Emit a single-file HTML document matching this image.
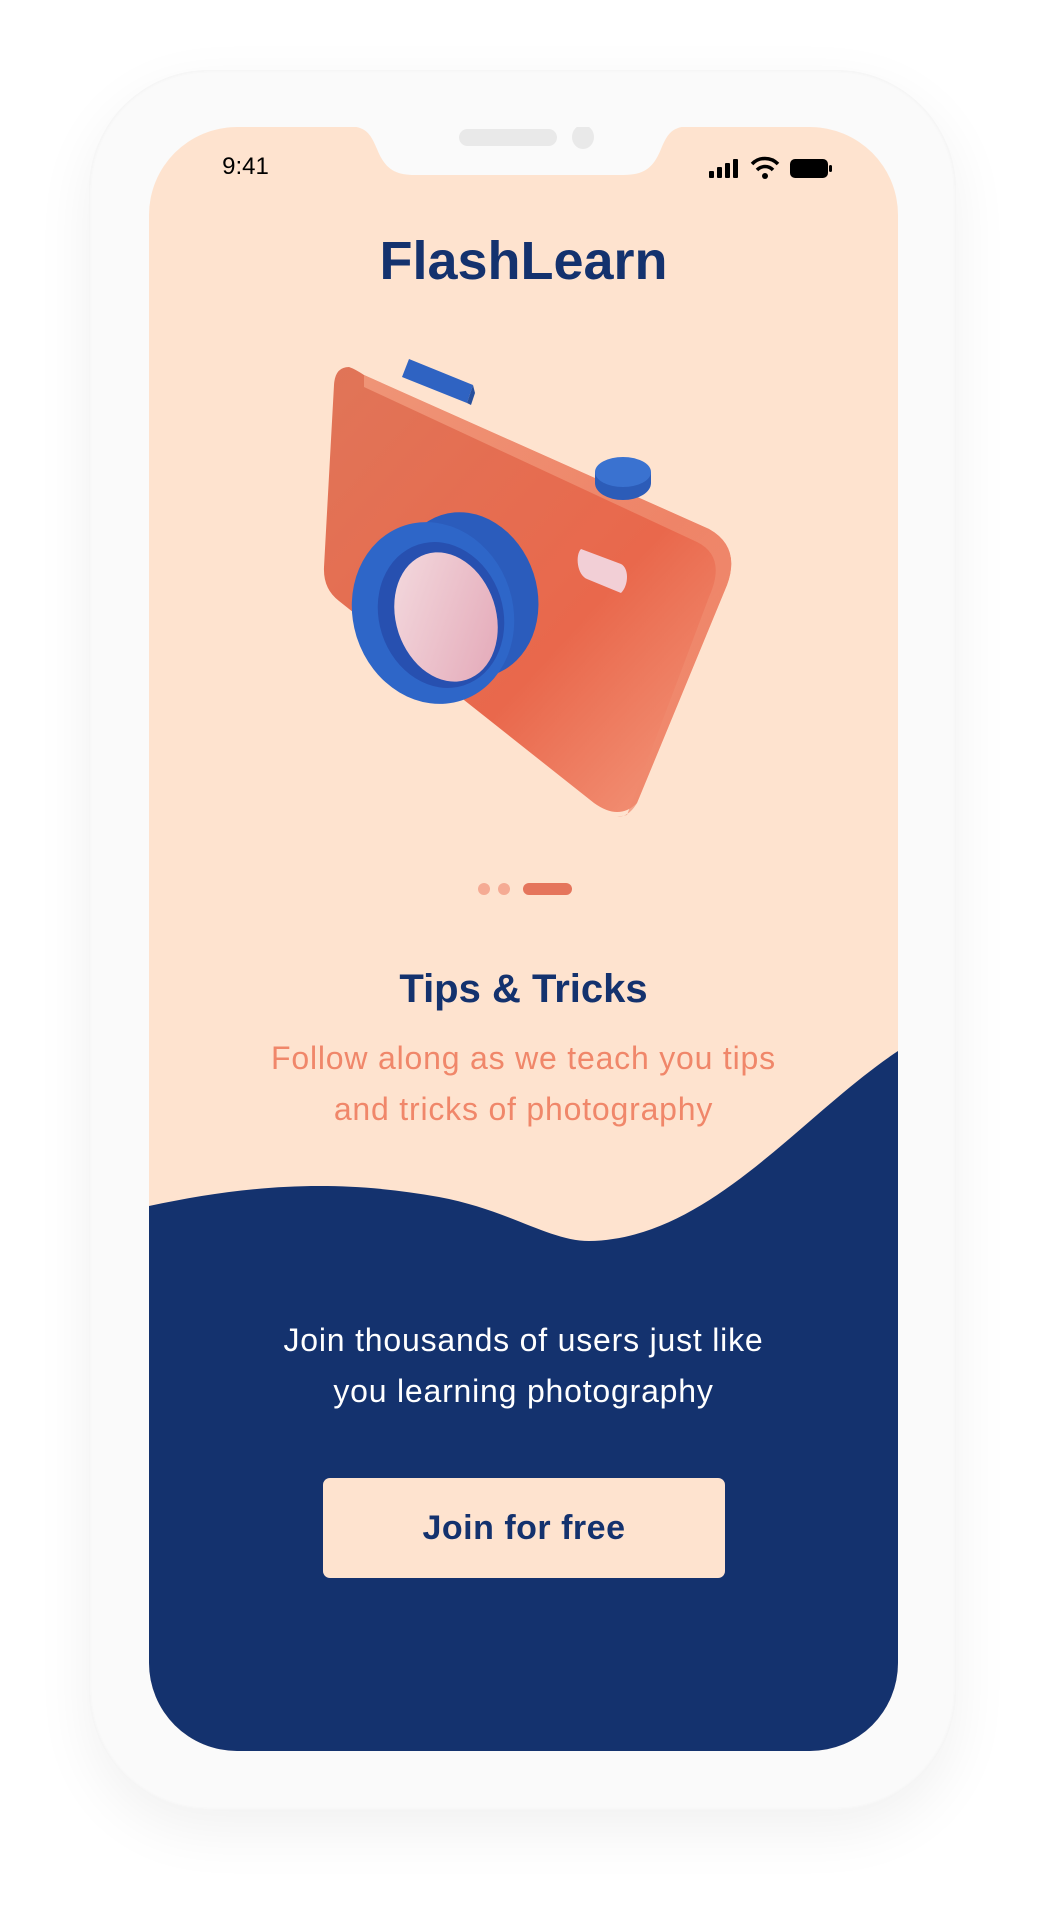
<!DOCTYPE html>
<html><head><meta charset="utf-8"><style>
html,body{margin:0;padding:0;}
body{width:1046px;height:1920px;background:#fff;position:relative;overflow:hidden;font-family:"Liberation Sans",sans-serif;}
.frame{position:absolute;left:89px;top:70px;width:867px;height:1740px;border-radius:120px;background:#fafafa;box-shadow:0 20px 60px rgba(0,0,0,0.06), inset 0 0 4px rgba(0,0,0,0.05);}
.screen{position:absolute;left:149px;top:127px;width:749px;height:1624px;border-radius:88px;overflow:hidden;background:#fee3cf;}
.t{position:absolute;left:0;width:749px;text-align:center;}
</style></head><body>
<div class="frame"></div>
<div class="screen">
<svg width="749" height="1624" style="position:absolute;left:0;top:0">
<defs>
<linearGradient id="bg" x1="0" y1="0" x2="1" y2="1"><stop offset="0" stop-color="#e07558"/><stop offset="0.6" stop-color="#e9684c"/><stop offset="1" stop-color="#f59c80"/></linearGradient>
<linearGradient id="sg" x1="0" y1="0" x2="1" y2="1"><stop offset="0" stop-color="#f5a284"/><stop offset="1" stop-color="#ee8468"/></linearGradient>
<linearGradient id="lg" x1="0" y1="0" x2="1" y2="1"><stop offset="0" stop-color="#f4dce0"/><stop offset="1" stop-color="#e3a6b6"/></linearGradient>
</defs>
<path d="M0 1079 C 90 1060, 180 1050, 290 1070 C 360 1083, 400 1114, 440 1114 C 560 1112, 650 990, 749 924 L749 1624 L0 1624 Z" fill="#14326e"/>
<path d="M200 -1 C 218 0 222 8 228 22 C 236 42 246 48 266 48 L474 48 C 494 48 504 42 512 22 C 518 8 522 0 540 -1 Z" fill="#fafafa"/>
<rect x="310" y="2" width="98" height="17" rx="8.5" fill="#e9e9e9"/>
<ellipse cx="434" cy="10" rx="11" ry="12" fill="#e9e9e9"/>
<rect x="560" y="44" width="5" height="7" rx="1" fill="#000"/>
<rect x="568" y="40" width="5" height="11" rx="1" fill="#000"/>
<rect x="576" y="36" width="5" height="15" rx="1" fill="#000"/>
<rect x="584" y="32" width="5" height="19" rx="1" fill="#000"/>
<path d="M603 37 A18 18 0 0 1 629 37" stroke="#000" stroke-width="3.5" fill="none"/>
<path d="M608 43 A11 11 0 0 1 624 43" stroke="#000" stroke-width="3.5" fill="none"/>
<circle cx="616" cy="49" r="3" fill="#000"/>
<rect x="641" y="32" width="38" height="19" rx="5" fill="#000"/>
<rect x="680" y="38" width="3" height="7" rx="1.5" fill="#000"/>
<path d="M200 240 Q 186 240 185 258 L 175 440 Q 174 462 190 474 L 445 676 Q 470 694 488 676 L 578 458 Q 592 420 560 402 L 215 248 Q 206 242 200 240 Z" fill="url(#bg)"/>
<path d="M215 248 L 560 402 Q 592 420 578 458 L 488 676 Q 480 690 468 690 L 478 688 L 560 470 Q 578 430 548 415 L 215 260 Z" fill="url(#sg)" opacity="0.7"/>
<path d="M253 250 L 260 232 L 324 258 L 318 276 Z" fill="#2f63c2"/>
<path d="M318 276 L 324 258 L 326 266 L 322 278 Z" fill="#274f9c"/>
<ellipse cx="474" cy="356" rx="28" ry="17" fill="#2c5cb8"/>
<rect x="446" y="345" width="56" height="11" fill="#2c5cb8"/>
<ellipse cx="474" cy="345" rx="28" ry="15" fill="#3a72d0"/>
<path d="M432 422 L 472 437 C 480 441 480 458 472 466 L 438 452 C 428 448 426 428 432 422 Z" fill="#f2cfd6"/>
<ellipse cx="318" cy="468" rx="70" ry="84" transform="rotate(-18 318 468)" fill="#2b5cbc"/>
<ellipse cx="284" cy="486" rx="80" ry="92" transform="rotate(-18 284 486)" fill="#2e66c8"/>
<ellipse cx="292" cy="488" rx="62" ry="74" transform="rotate(-18 292 488)" fill="#2750b0"/>
<ellipse cx="297" cy="490" rx="50" ry="66" transform="rotate(-18 297 490)" fill="url(#lg)"/>
<circle cx="335" cy="762" r="6" fill="#f5ab94"/>
<circle cx="355" cy="762" r="6" fill="#f5ab94"/>
<rect x="374" y="756" width="49" height="12" rx="6" fill="#e5755c"/>
</svg>
<div class="t" style="left:-278px;top:26px;font-size:24px;">9:41</div>
<div class="t" style="top:103px;font-size:54px;font-weight:bold;color:#14326e;">FlashLearn</div>
<div class="t" style="top:840px;font-size:40px;font-weight:bold;color:#14326e;">Tips &amp; Tricks</div>
<div class="t" style="top:906px;font-size:32px;letter-spacing:0.8px;line-height:51px;color:#f0876a;">Follow along as we teach you tips<br>and tricks of photography</div>
<div class="t" style="top:1188px;font-size:32px;letter-spacing:0.8px;line-height:51px;color:#fff;">Join thousands of users just like<br>you learning photography</div>
<div style="position:absolute;left:174px;top:1351px;width:402px;height:100px;border-radius:7px;background:#fee3cf;color:#14326e;font-weight:bold;font-size:34px;letter-spacing:0.5px;text-align:center;line-height:100px;">Join for free</div>
</div>
</body></html>
